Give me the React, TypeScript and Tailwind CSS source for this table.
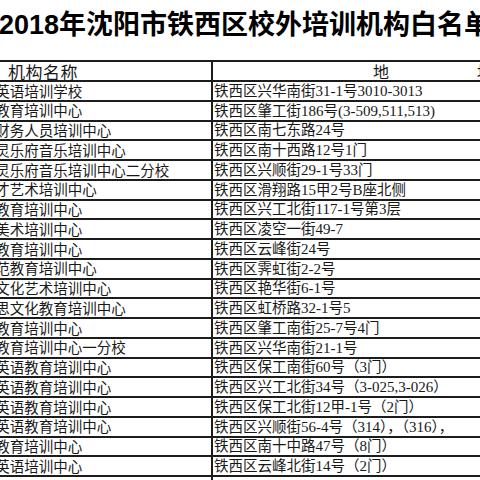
import React from "react";

const rows: [string, string][] = [
  ["英语培训学校", "铁西区兴华南街31-1号3010-3013"],
  ["教育培训中心", "铁西区肇工街186号(3-509,511,513)"],
  ["财务人员培训中心", "铁西区南七东路24号"],
  ["灵乐府音乐培训中心", "铁西区南十西路12号1门"],
  ["灵乐府音乐培训中心二分校", "铁西区兴顺街29-1号33门"],
  ["才艺术培训中心", "铁西区滑翔路15甲2号B座北侧"],
  ["教育培训中心", "铁西区兴工北街117-1号第3层"],
  ["美术培训中心", "铁西区凌空一街49-7"],
  ["教育培训中心", "铁西区云峰街24号"],
  ["范教育培训中心", "铁西区霁虹街2-2号"],
  ["文化艺术培训中心", "铁西区艳华街6-1号"],
  ["思文化教育培训中心", "铁西区虹桥路32-1号5"],
  ["教育培训中心", "铁西区肇工南街25-7号4门"],
  ["教育培训中心一分校", "铁西区兴华南街21-1号"],
  ["英语教育培训中心", "铁西区保工南街60号（3门）"],
  ["英语教育培训中心", "铁西区兴工北街34号（3-025,3-026）"],
  ["英语教育培训中心", "铁西区保工北街12甲-1号（2门）"],
  ["英语教育培训中心", "铁西区兴顺街56-4号（314），（316），"],
  ["教育培训中心", "铁西区南十中路47号（8门）"],
  ["英语培训中心", "铁西区云峰北街14号（2门）"],
  ["", ""],
];

function Mixed({ text }: { text: string }) {
  const parts = text.match(/[\x20-\x7e]+|[^\x20-\x7e]+/g) || [];
  return (
    <>
      {parts.map((p, i) =>
        /^[\x20-\x7e]+$/.test(p) ? (
          <span key={i} className="text-[15px]" style={{ fontFamily: '"Liberation Serif", serif' }}>
            {p}
          </span>
        ) : (
          <span key={i}>{p}</span>
        )
      )}
    </>
  );
}

const cellFont = {
  fontFamily: '"Noto Sans CJK SC", "Liberation Serif", sans-serif',
} as React.CSSProperties;

export default function App() {
  return (
    <div className="w-[480px] h-[480px] overflow-hidden bg-white text-[#181818]">
      <div
        className="h-[50px] flex items-center whitespace-nowrap font-bold text-[27px] leading-none -ml-[1px] text-black"
        style={{ fontFamily: '"Liberation Sans", "Noto Sans CJK SC", sans-serif' }}
      >
        2018年沈阳市铁西区校外培训机构白名单
      </div>
      <div className="h-[10px]" />
      <div className="w-[640px] border-t-2 border-[#1c1c1c]" style={cellFont}>
        <div className="flex h-[20px] border-b-2 border-[#1c1c1c]">
          <div className="w-[213px] shrink-0 border-r-2 border-[#1c1c1c] flex items-center pl-[8px] text-[17px] leading-none tracking-[0.5px] whitespace-nowrap">
            机构名称
          </div>
          <div className="flex-1 flex items-center pl-[160px] text-[16px] leading-none whitespace-nowrap">
            地<span className="ml-[88px]">址</span>
          </div>
        </div>
        {rows.map(([name, addr], i) => (
          <div key={i} className="flex h-[19.75px] border-b-2 border-[#1c1c1c]">
            <div className="w-[213px] shrink-0 border-r-2 border-[#1c1c1c] overflow-hidden flex items-center text-[14.5px] leading-none whitespace-nowrap">
              <span className="-ml-[4.7px]">{name}</span>
            </div>
            <div className="flex-1 flex items-center pl-[1px] text-[14.5px] leading-none whitespace-nowrap">
              <span>
                <Mixed text={addr} />
              </span>
            </div>
          </div>
        ))}
      </div>
    </div>
  );
}
